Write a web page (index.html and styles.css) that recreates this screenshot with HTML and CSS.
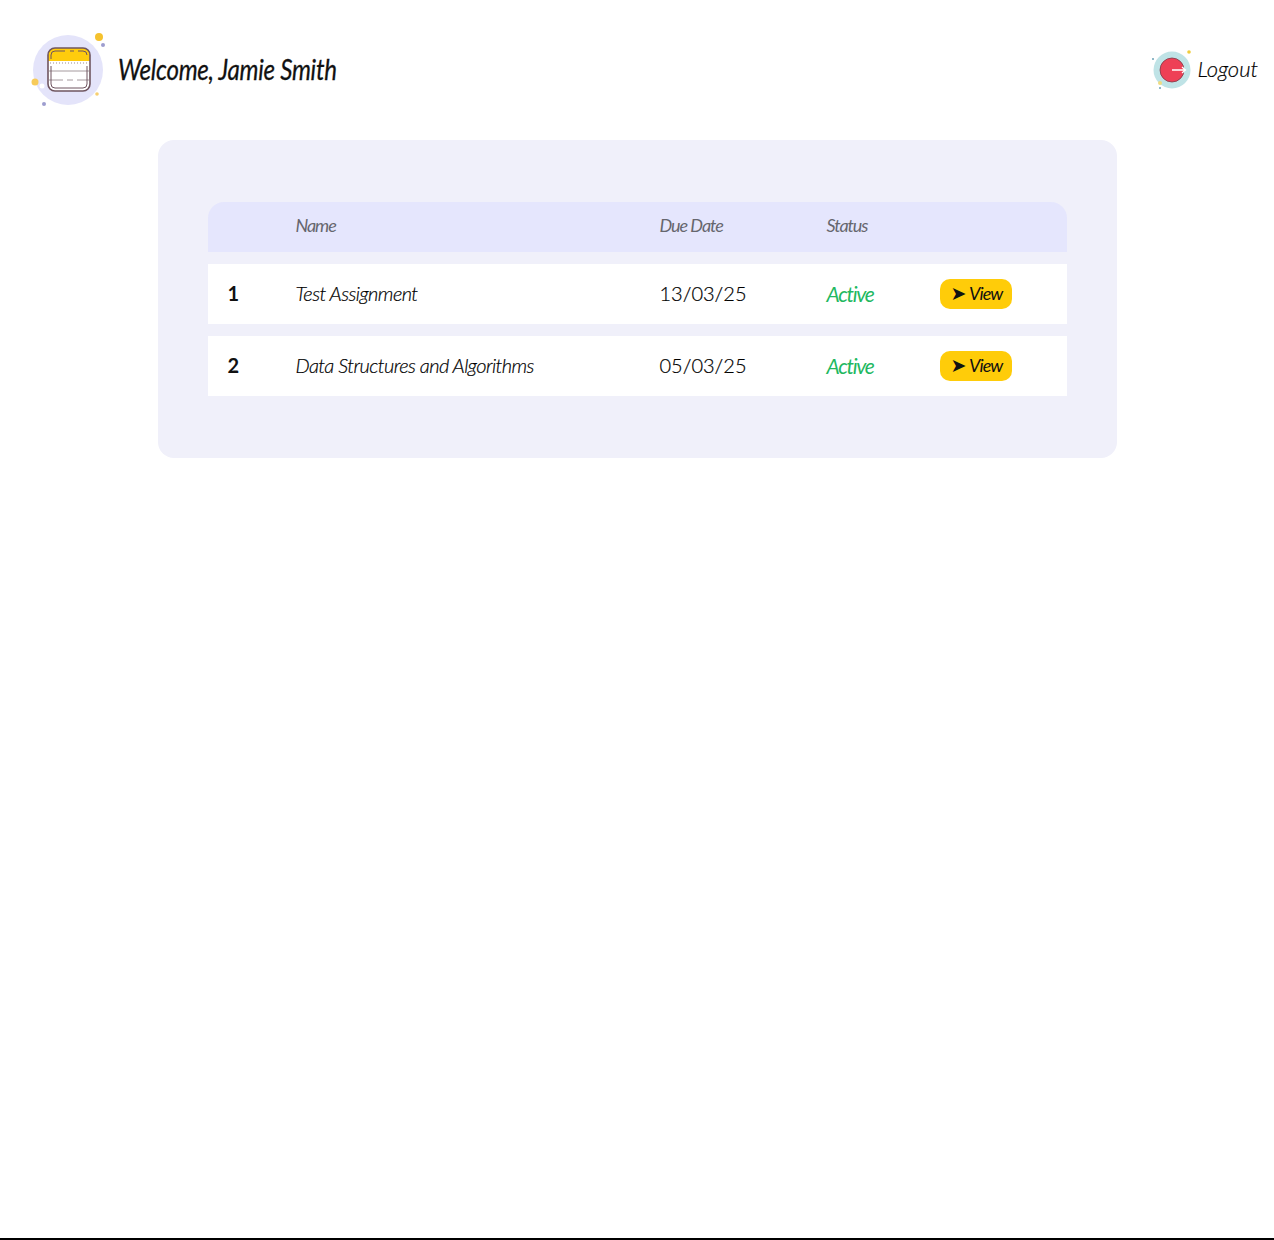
FILE: index.html
```html
<!DOCTYPE html>
<html lang="en">
  <head>
    <title>Assignments</title>
    <link rel="stylesheet" href="styles.css">
  </head>
  <body>
    <div class="page">
      <header class="topbar">
        <div class="welcome">
          <svg class="welcome-icon" width="80" height="80" viewBox="0 0 80 80">
            <circle cx="40" cy="40" r="35" fill="#e4e4fa"/>
            <circle cx="71" cy="7" r="4" fill="#f5c22e"/>
            <circle cx="75" cy="15" r="2" fill="#9d9dcf"/>
            <circle cx="7" cy="52" r="3.5" fill="#f7cb5a"/>
            <circle cx="16" cy="74" r="2" fill="#9d9dcf"/>
            <circle cx="69" cy="64" r="1.8" fill="#f7cf70"/>
            <circle cx="14" cy="56" r="2.5" fill="#fff"/>
            <rect x="20" y="18" width="42" height="43" rx="7" fill="#fff"/>
            <path d="M20 31v-6a7 7 0 0 1 7-7h28a7 7 0 0 1 7 7v6z" fill="#ffcc0d"/>
            <rect x="20" y="18" width="42" height="43" rx="7" fill="none" stroke="#6f5560" stroke-width="1.6"/>
            <path d="M23 29v-4a4 4 0 0 1 4-4h10M42 21h4M50 21h5a4 4 0 0 1 4 4" fill="none" stroke="#6f5560" stroke-width="1"/>
            <path d="M22 33h38" stroke="#9a8a90" stroke-width="1" stroke-dasharray="1 2"/>
            <path d="M21 41h40M21 50h14M39 50h6M49 50h12" stroke="#a59a9e" stroke-width="1"/>
            <path d="M23 36v18a4 4 0 0 0 4 4h28a4 4 0 0 0 4-4v-18" fill="none" stroke="#6f5560" stroke-width="1"/>
          </svg>
          <h1 class="welcome-text">Welcome, Jamie Smith</h1>
        </div>
        <a class="logout" href="#">
          <svg class="logout-icon" width="44" height="44" viewBox="0 0 44 44">
            <circle cx="22" cy="22" r="18.5" fill="#bfe3e6"/>
            <circle cx="22" cy="22" r="12" fill="#ee4056" stroke="#7c3a48" stroke-width="0.8"/>
            <path d="M22 22h13M32 19l3.500 3-3.500 3" fill="none" stroke="#fff" stroke-width="1.300"/>
            <circle cx="39" cy="4" r="1.800" fill="#f0cc3c"/>
            <circle cx="3" cy="11" r="1" fill="#6aa0b4"/>
            <circle cx="10" cy="35" r="2" fill="#f0dc80"/>
            <circle cx="10" cy="40" r="1" fill="#6aa0b4"/>
            <circle cx="37" cy="35" r="1" fill="#fff"/>
          </svg>
          <span>Logout</span>
        </a>
      </header>

      <main class="panel">
        <div class="table-head row-grid">
          <span></span>
          <span class="head-cell">Name</span>
          <span class="head-cell">Due Date</span>
          <span class="head-cell">Status</span>
          <span></span>
        </div>
        <div class="table-row row-grid">
          <span class="num">1</span>
          <span class="name">Test Assignment</span>
          <span class="date">13/03/25</span>
          <span class="status">Active</span>
          <span><button class="view-btn"><span class="arrow">➤</span> View</button></span>
        </div>
        <div class="table-row row-grid">
          <span class="num">2</span>
          <span class="name">Data Structures and Algorithms</span>
          <span class="date">05/03/25</span>
          <span class="status">Active</span>
          <span><button class="view-btn"><span class="arrow">➤</span> View</button></span>
        </div>
      </main>
    </div>
  </body>
</html>
```

FILE: styles.css
```css
html, body {
  margin: 0;
  background: #fff;
}

body {
  font-family: "Lato", sans-serif;
  color: #111;
}

.page {
  box-sizing: border-box;
  height: 1240px;
  border-bottom: 2px solid #000;
  overflow: hidden;
}

.topbar {
  display: flex;
  justify-content: space-between;
  align-items: center;
  height: 140px;
  padding: 0 16px 0 28px;
}

.welcome {
  display: flex;
  align-items: center;
  gap: 10px;
}

.welcome-text {
  margin: 0 0 4px;
  font-size: 29px;
  font-weight: 400;
  font-style: italic;
  letter-spacing: -0.3px;
  transform: scaleX(0.83);
  transform-origin: left center;
  -webkit-text-stroke: 0.3px #111;
}

.logout {
  display: flex;
  align-items: center;
  gap: 4px;
  color: #000;
  text-decoration: none;
  font-size: 22px;
  font-weight: 300;
  font-style: italic;
  -webkit-text-stroke: 0.2px #000;
}

.logout span {
  padding-bottom: 3px;
}

.panel {
  width: 859px;
  margin: 0 auto;
  padding: 62px 50px;
  background: #f0f0fa;
  border-radius: 16px;
}

.row-grid {
  display: grid;
  grid-template-columns: 88px 364px 167px 113px 1fr;
  align-items: center;
}

.table-head {
  height: 50px;
  background: #e5e6fd;
  border-radius: 16px 16px 0 0;
}

.head-cell {
  padding-bottom: 5px;
  font-size: 18px;
  font-style: italic;
  color: #66666e;
  letter-spacing: -1.05px;
}

.table-row {
  height: 60px;
  margin-top: 12px;
  background: #fff;
}

.num {
  padding-left: 20px;
  padding-bottom: 2px;
  font-size: 20px;
  font-weight: 700;
}

.name {
  padding-bottom: 2px;
  font-size: 20px;
  font-weight: 300;
  font-style: italic;
  color: #000;
  letter-spacing: -0.57px;
  -webkit-text-stroke: 0.2px #000;
}

.date {
  padding-bottom: 2px;
  font-size: 20px;
  font-weight: 300;
  color: #000;
  -webkit-text-stroke: 0.2px #000;
}

.status {
  padding-bottom: 2px;
  font-size: 21px;
  font-style: italic;
  color: #22b85f;
  letter-spacing: -1.25px;
}

.view-btn {
  display: block;
  width: 72px;
  height: 30px;
  padding: 0 0 2px 2px;
  border: 0;
  border-radius: 10px;
  background: #ffcc09;
  color: #111;
  font-family: "Lato", sans-serif;
  font-size: 18px;
  font-style: italic;
  letter-spacing: -0.95px;
}

.arrow {
  font-family: "DejaVu Sans", sans-serif;
  font-size: 19px;
  font-style: normal;
  letter-spacing: 0;
}
```
